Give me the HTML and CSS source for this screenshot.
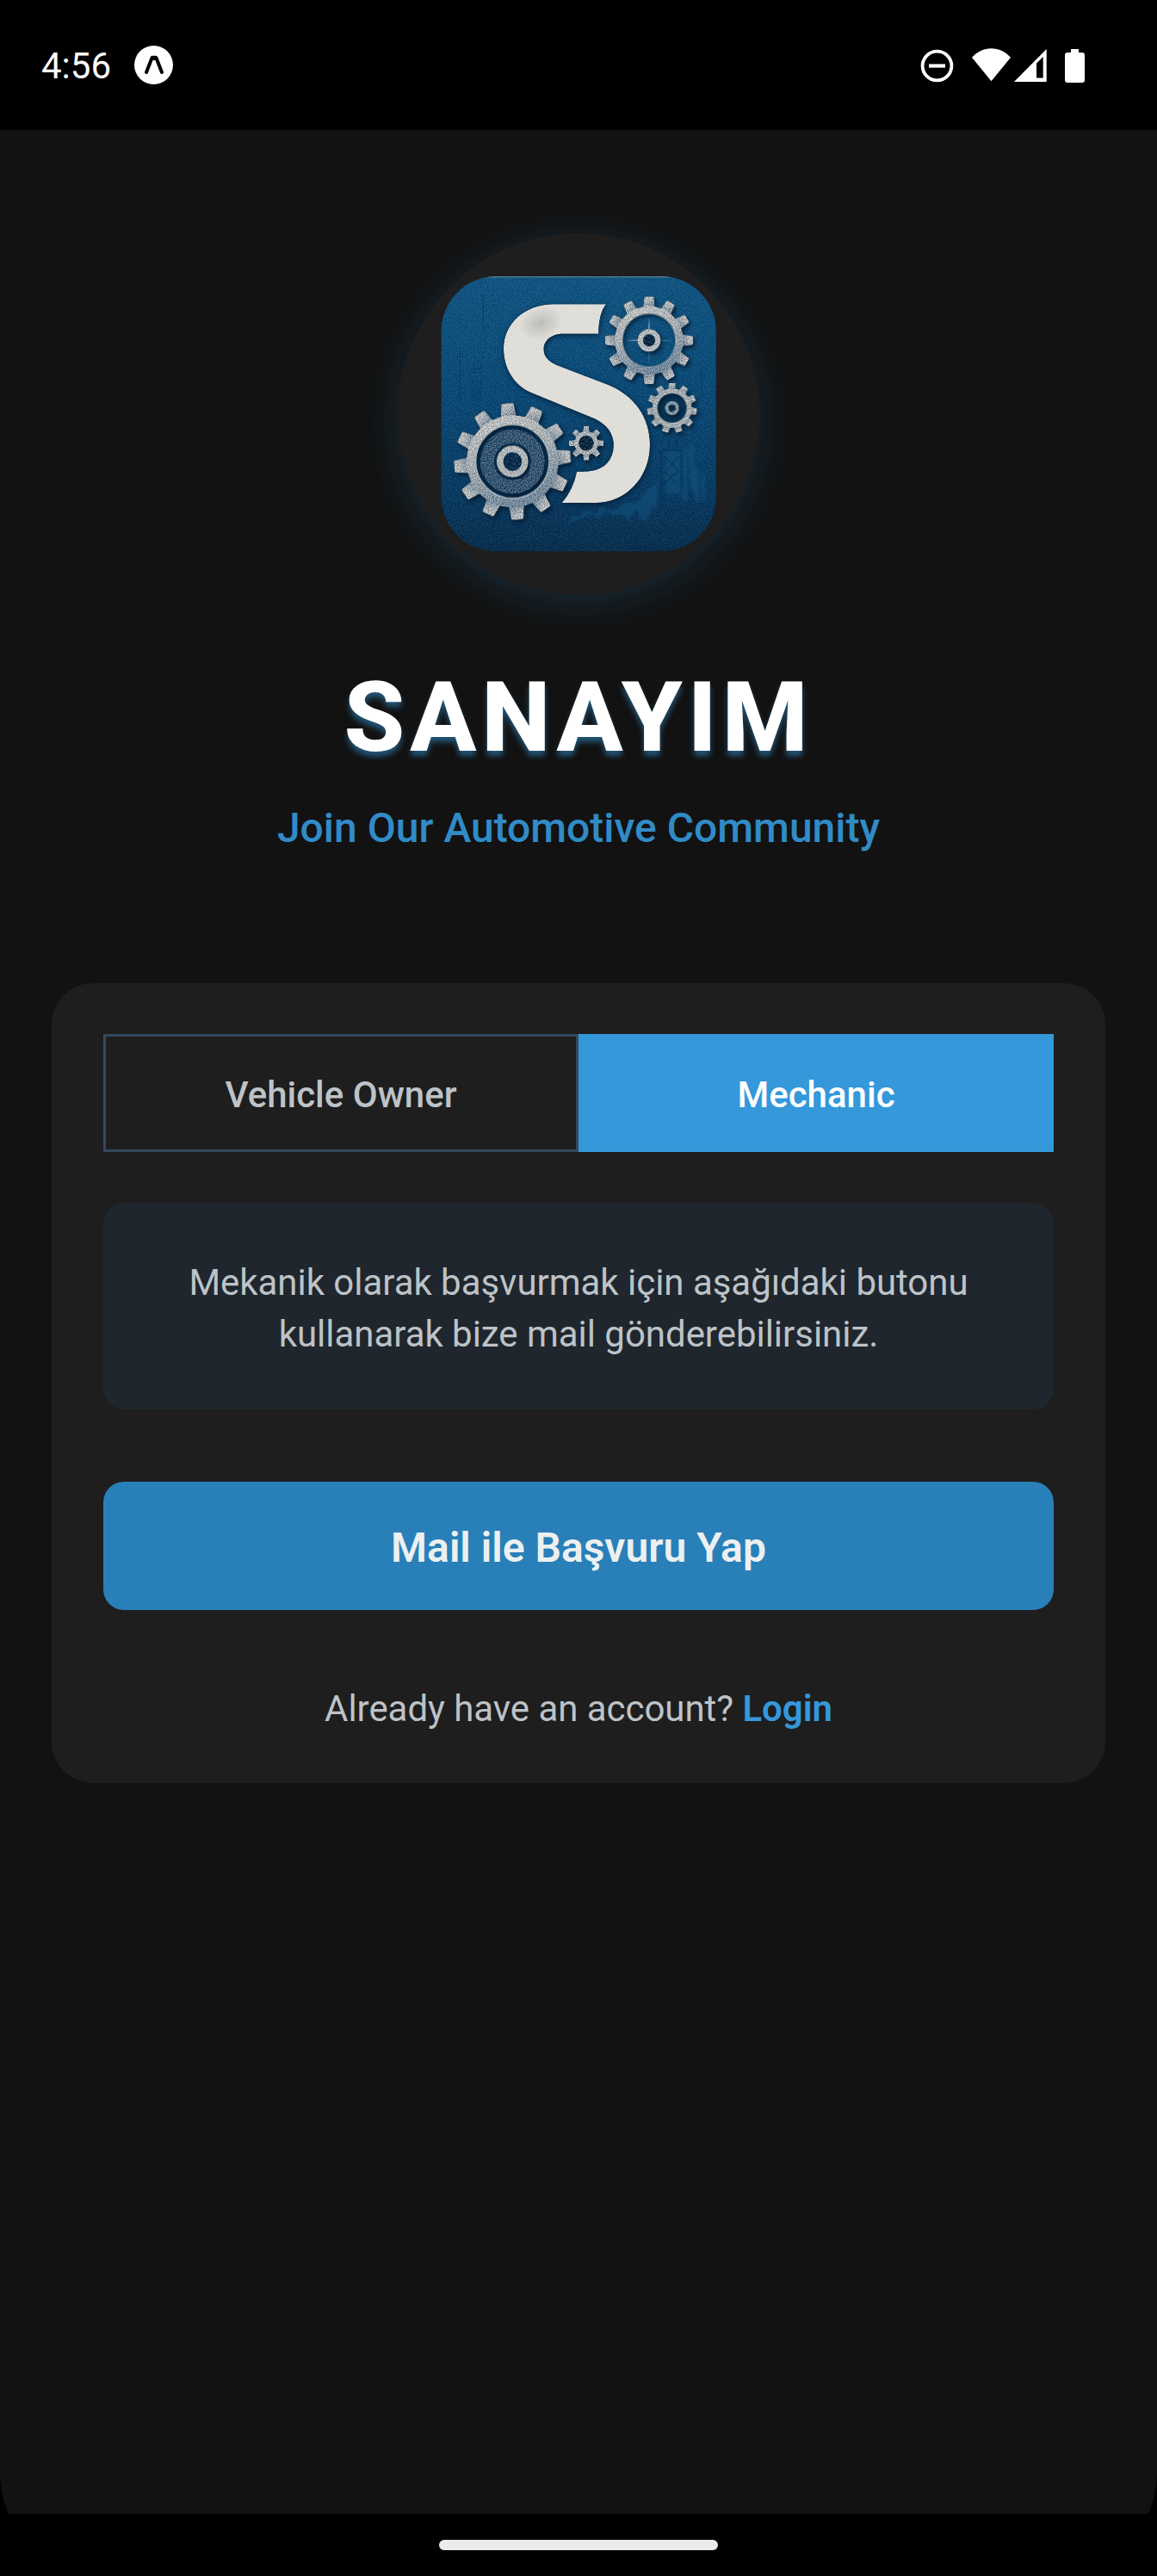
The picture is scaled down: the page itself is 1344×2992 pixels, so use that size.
FILE: index.html
```html
<!DOCTYPE html>
<html lang="en">
<head>
<meta charset="utf-8">
<title>Sanayim</title>
<link rel="stylesheet" href="styles.css">
</head>
<body>
<div class="screen">
  <header class="status-bar">
    <span class="clock">4:56</span>
    <svg class="app-icon" viewBox="0 0 45 45"><circle cx="22.5" cy="22.5" r="22.5" fill="#fff"/><path d="M14 31 20.600 14H25.400L32 31" fill="none" stroke="#000" stroke-width="4" stroke-linejoin="round" stroke-linecap="round"/><path d="M20.500 11.800H25.500L26 17H20Z"/><path d="M23 17 27.500 29H18.500Z" fill="#fff"/></svg>
    <svg class="status-icons" viewBox="1068 50 194 50">
      <g fill="#fff">
        <circle cx="1088.500" cy="75.500" r="16.900" fill="none" stroke="#fff" stroke-width="3.800"/>
        <path d="M1079 73.400h19v4.200h-19z"/>
        <path d="M1151.500 93.300 1129 65.800C1135 59 1143 55.200 1151.500 55.200S1168 59 1174 65.800Z"/>
        <path fill-rule="evenodd" d="M1178 94 1215.700 56V94ZM1204 72.500V89.500H1211.700V65Z"/>
        <path d="M1244 56h9v4h4a3 3 0 0 1 3 3v29a3 3 0 0 1-3 3h-17a3 3 0 0 1-3-3v-29a3 3 0 0 1 3-3h4z"/>
      </g>
    </svg>
  </header>

  <main class="content">
    <section class="hero">
      <div class="logo-disc">
        <svg class="logo" viewBox="246 243 960 960">
          <defs>
            <linearGradient id="sky" x1="0" y1="0" x2="0" y2="1">
              <stop offset="0" stop-color="#125580"/><stop offset=".4" stop-color="#0d4b77"/><stop offset=".75" stop-color="#0a3d64"/><stop offset="1" stop-color="#092f4e"/>
            </linearGradient>
            <linearGradient id="steel" x1="0" y1="0" x2=".35" y2="1">
              <stop offset="0" stop-color="#c3c4c3"/><stop offset=".5" stop-color="#a9afb3"/><stop offset="1" stop-color="#75899a"/>
            </linearGradient>
            <radialGradient id="smudge"><stop offset="0" stop-color="#8f8e8a" stop-opacity=".42"/><stop offset="1" stop-color="#8f8e8a" stop-opacity="0"/></radialGradient>
            <filter id="grain" x="-5%" y="-5%" width="110%" height="110%" color-interpolation-filters="sRGB">
              <feTurbulence type="fractalNoise" baseFrequency=".28" numOctaves="2" seed="4"/>
              <feColorMatrix values="2 0 0 0 -.5 2 0 0 0 -.5 2 0 0 0 -.5 0 0 0 0 1" result="n"/>
              <feComposite in="SourceGraphic" in2="n" operator="arithmetic" k2="1" k3=".13" k4="-.065"/>
              <feComposite in2="SourceAlpha" operator="in"/>
            </filter>
            <filter id="rough" x="-15%" y="-15%" width="130%" height="135%" color-interpolation-filters="sRGB">
              <feTurbulence type="fractalNoise" baseFrequency=".26" numOctaves="2" seed="9"/>
              <feColorMatrix values="2 0 0 0 -.5 2 0 0 0 -.5 2 0 0 0 -.5 0 0 0 0 1" result="n"/>
              <feComposite in="SourceGraphic" in2="n" operator="arithmetic" k2="1" k3=".36" k4="-.18"/>
              <feComposite in2="SourceAlpha" operator="in" result="metal"/>
              <feDropShadow in="metal" dx="7" dy="9" stdDeviation="8" flood-color="#021a30" flood-opacity=".85"/>
            </filter>
            <filter id="paper" x="-15%" y="-15%" width="130%" height="130%" color-interpolation-filters="sRGB">
              <feTurbulence type="fractalNoise" baseFrequency=".3" numOctaves="2" seed="2"/>
              <feColorMatrix values="2 0 0 0 -.5 2 0 0 0 -.5 2 0 0 0 -.5 0 0 0 0 1" result="n"/>
              <feComposite in="SourceGraphic" in2="n" operator="arithmetic" k2="1" k3=".05" k4="-.025"/>
              <feComposite in2="SourceAlpha" operator="in" result="sheet"/>
              <feDropShadow in="sheet" dx="2" dy="5" stdDeviation="10" flood-color="#021a30" flood-opacity=".9"/>
            </filter>
            <filter id="soft"><feGaussianBlur stdDeviation="4"/></filter>
            <clipPath id="tile"><rect x="248" y="243" width="957" height="958" rx="190"/></clipPath>
            <path id="tooth" d="M-21-112-16.500-150Q-16-153-13-153H13Q16-153 16.500-150L21-112Z"/>
            <g id="teeth3"><use href="#tooth"/><use href="#tooth" transform="rotate(30)"/><use href="#tooth" transform="rotate(60)"/></g>
            <g id="teeth12"><use href="#teeth3"/><use href="#teeth3" transform="rotate(90)"/><use href="#teeth3" transform="rotate(180)"/><use href="#teeth3" transform="rotate(270)"/></g>
            <path id="tooth-s" d="M-14-64-11-87H11L14-64Z"/>
            <path id="tooth-xs" d="M-12-38-9-60H9L12-38Z"/>
          </defs>
          <g clip-path="url(#tile)">
            <rect x="246" y="243" width="960" height="960" fill="url(#sky)" filter="url(#grain)"/>
            <g filter="url(#soft)" fill="#155a88" opacity=".45">
              <path d="M690 1105 705 1075 730 1080 745 1060 790 1068 800 1045 850 1060 885 1035 930 1030 965 990 1000 960V1055L985 1040 965 1095 940 1090 930 1050 900 1095 880 1070 850 1078 830 1060 795 1085 770 1070 735 1085Z"/>
              <path d="M1030 850h50v150h-50zM1090 840h14v185h-14zM1110 830h20v160h-14zM1130 915h16v110h-16zM1155 930h12v100h-12z"/>
            </g>
            <g fill="none" stroke="#073354" stroke-width="5" opacity=".6">
              <path d="M1014 850V1050M1085 850V980M1020 850H1085M1025 870 1075 920 1025 965M1075 870 1028 925 1075 970M1040 810V845M1068 810V845"/>
              <path stroke-width="3" d="M394 310V430M313 490V680M1156 560V670M355 600V675M365 605V680M375 605V680M384 600V675M350 566H392M352 578H390M360 545Q371 525 385 545V565H360Z"/>
            </g>
            <path d="M246 245H1206" stroke="#96a9b5" stroke-width="3" opacity=".7"/>
          </g>
          <g filter="url(#paper)">
            <path fill="#dfded9" d="M822 340Q796 374 796 443H672C630 443 605 468 605 496C605 522 621 540 650 552L832 622C922 660 975 735 975 830C975 945 890 1032 785 1032H668Q708 985 720 924C735 922 748 924 772 920C820 912 848 880 848 830C848 790 825 760 785 740L560 648C500 622 465 562 465 495C465 405 542 340 640 340Z"/>
            <ellipse cx="594" cy="406" rx="78" ry="58" fill="url(#smudge)" transform="rotate(-18 594 406)"/>
          </g>
          <g transform="translate(972 466)">
            <path d="M0-82 4-30 0 86-4-30ZM-78 0-30-4 80 0-30 4Z" fill="#6e94ad"/>
            <g filter="url(#rough)" fill="url(#steel)"><use href="#teeth12"/><path fill-rule="evenodd" d="M-120 0a120 120 0 1 0 240 0a120 120 0 1 0-240 0ZM-93 0a93 93 0 1 0 186 0a93 93 0 1 0-186 0Z"/><circle r="31" fill="#0a2c47" stroke="#b4b8ba" stroke-width="19"/></g>
            <circle r="93" fill="none" stroke="#d8dcdc" stroke-width="3" opacity=".7"/>
          </g>
          <g transform="translate(1052 702)">
            <circle r="55" fill="#083453"/>
            <g filter="url(#rough)" fill="url(#steel)">
              <use href="#tooth-s"/><use href="#tooth-s" transform="rotate(32.730)"/><use href="#tooth-s" transform="rotate(65.450)"/><use href="#tooth-s" transform="rotate(98.180)"/><use href="#tooth-s" transform="rotate(130.910)"/><use href="#tooth-s" transform="rotate(163.640)"/><use href="#tooth-s" transform="rotate(196.360)"/><use href="#tooth-s" transform="rotate(229.090)"/><use href="#tooth-s" transform="rotate(261.820)"/><use href="#tooth-s" transform="rotate(294.550)"/><use href="#tooth-s" transform="rotate(327.270)"/>
              <circle r="60.500" fill="none" stroke="#a5adb1" stroke-width="17"/><circle r="19" fill="#0a2c47" stroke="#8498a5" stroke-width="12"/>
            </g>
            <circle r="52" fill="none" stroke="#ccd3d6" stroke-width="2.500" opacity=".7"/>
          </g>
          <g transform="translate(753 824)" filter="url(#rough)" fill="url(#steel)">
            <use href="#tooth-xs"/><use href="#tooth-xs" transform="rotate(45)"/><use href="#tooth-xs" transform="rotate(90)"/><use href="#tooth-xs" transform="rotate(135)"/><use href="#tooth-xs" transform="rotate(180)"/><use href="#tooth-xs" transform="rotate(225)"/><use href="#tooth-xs" transform="rotate(270)"/><use href="#tooth-xs" transform="rotate(315)"/>
            <circle r="34" fill="#0d2a40" stroke="#aab0b3" stroke-width="15"/>
          </g>
          <g transform="translate(496 888)">
            <circle r="132" fill="#07304f"/>
            <g filter="url(#rough)"><circle r="88" fill="none" stroke="#375672" stroke-width="50"/></g>
            <g filter="url(#rough)" fill="url(#steel)">
              <use href="#teeth12" transform="rotate(-5) scale(1.330)"/>
              <path fill-rule="evenodd" d="M-161 0a161 161 0 1 0 322 0a161 161 0 1 0-322 0ZM-128 0a128 128 0 1 0 256 0a128 128 0 1 0-256 0Z"/>
            </g>
            <circle r="128" fill="none" stroke="#d8dcdc" stroke-width="4" opacity=".75"/>
            <circle r="64" fill="#08304f"/>
            <circle r="44" fill="#07304f" stroke="#b0b5b8" stroke-width="23" filter="url(#rough)"/>
          </g>
        </svg>
      </div>
      <h1 class="title">SANAYIM</h1>
      <p class="tagline">Join Our Automotive Community</p>
    </section>

    <section class="card">
      <div class="tabs">
        <button class="tab">Vehicle Owner</button>
        <button class="tab tab-active">Mechanic</button>
      </div>
      <p class="info">Mekanik olarak başvurmak için aşağıdaki butonu<br>kullanarak bize mail gönderebilirsiniz.</p>
      <button class="mail-button">Mail ile Başvuru Yap</button>
      <p class="login-line">Already have an account? <a class="login-link">Login</a></p>
    </section>
  </main>

  <footer class="nav-bar"><span class="nav-handle"></span></footer>
</div>
</body>
</html>
```
FILE: styles.css
```css
* { box-sizing: border-box; }
body {
  margin: 0;
  background: #000;
  color: #bdc3c7;
  font-family: Roboto, "Noto Sans", sans-serif;
}
h1, p { margin: 0; }
button {
  font: inherit;
  border: 0;
  padding: 0;
  color: inherit;
}
.screen {
  width: 1344px;
  height: 2992px;
  display: flex;
  flex-direction: column;
  border-radius: 0 0 120px 120px;
  overflow: hidden;
}
.status-bar {
  height: 151px;
  background: #000;
  display: flex;
  align-items: center;
  padding: 0 82px 0 48px;
}
.clock {
  color: #fff;
  font-size: 42px;
  line-height: 50px;
  width: 108px;
  padding-top: 2px;
}
.app-icon { width: 45px; height: 45px; }
.status-icons { width: 194px; height: 50px; margin-left: auto; }
.content {
  flex: 1;
  background: #121212;
  padding: 120px 60px 0;
}
.hero {
  height: 871px;
  display: flex;
  flex-direction: column;
  align-items: center;
}
.logo-disc {
  width: 420px;
  height: 420px;
  border-radius: 50%;
  background: #1e1e1e;
  box-shadow: 0 8px 45px rgba(52, 152, 219, .19);
  display: flex;
  align-items: center;
  justify-content: center;
}
.logo { width: 320px; height: 320px; }
.title {
  margin-top: 75px;
  color: #fff;
  font-size: 114px;
  line-height: 134px;
  font-weight: 800;
  letter-spacing: 6px;
  text-shadow: 0 6px 6px rgba(52, 152, 219, .5);
}
.tagline {
  margin-top: 34px;
  color: #318bc7;
  font-size: 48px;
  line-height: 56px;
  font-weight: 500;
}
.card {
  height: 929px;
  background: #1e1e1e;
  border-radius: 48px;
  padding: 59px 60px 0;
  display: flex;
  flex-direction: column;
}
.tabs { display: flex; height: 137px; }
.tab {
  flex: 1;
  background: transparent;
  border: 3px solid #34495e;
  font-size: 42px;
  font-weight: 500;
  padding-top: 4px;
}
.tab-active {
  background: #3498db;
  border-color: #3498db;
  color: #fff;
}
.info {
  margin-top: 59px;
  height: 240px;
  padding-top: 63px;
  border-radius: 24px;
  background: #1f262d;
  font-size: 42px;
  line-height: 60px;
  letter-spacing: -.03px;
  text-align: center;
}
.mail-button {
  margin-top: 84px;
  height: 149px;
  border-radius: 24px;
  background: #2980b9;
  color: #ecf0f1;
  font-size: 48px;
  font-weight: 600;
  padding-top: 4px;
}
.login-line {
  margin-top: 90px;
  font-size: 42px;
  line-height: 50px;
  letter-spacing: -.05px;
  text-align: center;
}
.login-link { color: #3498db; font-weight: 600; }
.nav-bar {
  height: 72px;
  background: #000;
  display: flex;
  justify-content: center;
  padding-top: 30px;
}
.nav-handle {
  width: 324px;
  height: 12px;
  border-radius: 6px;
  background: #ebebeb;
}
```
